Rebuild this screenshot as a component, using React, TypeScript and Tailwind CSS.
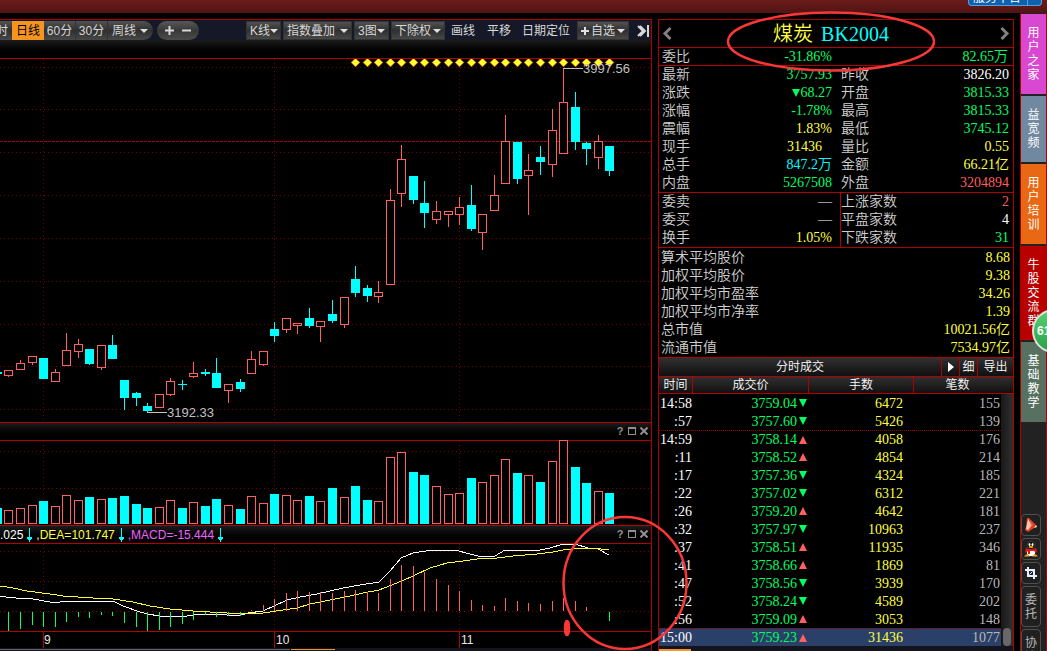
import { ReactNode } from "react";

// [kind, high, body top, body bottom, low, volume top, macd end]
type Candle = ["u" | "d", number, number, number, number, number, number];

const CANDLES: Candle[] = [
  ["u", 370, 370, 376, 377, 510, 631],
  ["u", 360, 363, 370, 370, 508, 629],
  ["u", 356, 356, 363, 365, 505, 625],
  ["d", 358, 358, 379, 379, 501, 627],
  ["u", 369, 372, 382, 382, 506, 627],
  ["u", 333, 350, 366, 366, 495, 622],
  ["u", 339, 344, 352, 358, 500, 617],
  ["d", 349, 349, 364, 365, 497, 618],
  ["u", 345, 345, 368, 370, 499, 615],
  ["d", 335, 345, 359, 359, 498, 616],
  ["d", 380, 380, 398, 410, 496, 623],
  ["d", 392, 393, 398, 406, 504, 627],
  ["d", 403, 406, 411, 412, 508, 631],
  ["u", 394, 394, 408, 408, 507, 630],
  ["u", 378, 381, 395, 396, 500, 627],
  ["d", 380, 384, 385, 390, 508, 624],
  ["u", 362, 373, 377, 378, 502, 620],
  ["d", 369, 372, 374, 376, 506, 615],
  ["d", 358, 373, 388, 388, 499, 617],
  ["u", 384, 384, 391, 403, 505, 616],
  ["d", 379, 382, 389, 392, 509, 616],
  ["u", 351, 359, 374, 374, 496, 610],
  ["u", 351, 351, 365, 366, 503, 605],
  ["d", 322, 329, 336, 342, 494, 599],
  ["u", 318, 318, 330, 333, 495, 593],
  ["u", 323, 323, 326, 334, 500, 591],
  ["d", 308, 318, 326, 328, 496, 592],
  ["u", 321, 321, 327, 342, 501, 592],
  ["d", 300, 314, 321, 323, 488, 593],
  ["u", 297, 297, 325, 328, 497, 591],
  ["d", 266, 279, 293, 297, 486, 590],
  ["d", 285, 288, 296, 302, 500, 592],
  ["u", 281, 292, 297, 303, 501, 593],
  ["u", 189, 200, 285, 285, 457, 579],
  ["u", 145, 159, 194, 207, 452, 565],
  ["d", 176, 176, 200, 204, 472, 566],
  ["d", 181, 203, 213, 228, 475, 572],
  ["u", 201, 211, 220, 224, 486, 579],
  ["u", 211, 211, 215, 227, 494, 585],
  ["u", 197, 207, 215, 225, 493, 591],
  ["d", 185, 205, 229, 231, 478, 600],
  ["u", 214, 214, 233, 250, 482, 605],
  ["u", 175, 195, 211, 211, 475, 606],
  ["u", 115, 141, 184, 184, 459, 598],
  ["d", 142, 142, 179, 184, 473, 601],
  ["u", 154, 170, 176, 215, 475, 603],
  ["d", 146, 157, 162, 175, 482, 604],
  ["u", 109, 130, 165, 177, 461, 601],
  ["u", 68, 102, 154, 154, 440, 598],
  ["d", 92, 107, 142, 150, 467, 601],
  ["d", 142, 143, 149, 165, 483, 607],
  ["u", 135, 141, 158, 169, 491, 611],
  ["d", 146, 146, 171, 176, 493, 621],
];

const DIF =
  "0,596 6,597 16,598 33,599 50,602 60,602 73,601 97,601 113,601 123,606 137,611 147,614 160,616 187,616 200,614 227,615 238,616 248,613 263,611 274,606 287,600 300,597 317,594 330,591 343,588 360,585 379,582 390,571 401,558 413,553 432,550 455,550 470,554 478,556 495,556 505,550 540,550 550,548 563,544 575,544 588,548 598,549 609,555";
const DEA =
  "0,586 13,588 27,591 50,594 63,596 93,598 113,599 133,602 150,606 170,609 193,611 227,613 240,614 263,613 283,610 297,608 310,604 330,600 350,596 363,593 379,590 397,583 413,576 430,568 447,563 463,561 477,559 497,558 513,556 537,554 553,552 563,550 580,548 593,548 609,550";

const cx = (i: number) => Math.round(8.4 + 11.556 * i);

const RED = "#ff6060";
const CYAN = "#00ffff";

function Grid({ rows, top, bottom }: { rows: number[]; top: number; bottom: number }) {
  return (
    <g stroke="#780000" strokeDasharray="1 3" shapeRendering="crispEdges">
      {rows.map((y) => (
        <line key={y} x1={0} x2={650} y1={y + 0.5} y2={y + 0.5} />
      ))}
      {[43, 274, 459].map((x) => (
        <line key={x} x1={x + 0.5} x2={x + 0.5} y1={top} y2={bottom} />
      ))}
    </g>
  );
}

function PriceChart() {
  return (
    <svg className="block w-full h-[363px]" viewBox="0 59 651 363" preserveAspectRatio="xMaxYMid meet" role="img" aria-label="日线">
      <Grid rows={[67, 109, 152, 195, 238, 281, 324, 366, 409]} top={59} bottom={420} />
      <line x1={0} x2={651} y1={141.5} y2={141.5} stroke="#b00000" strokeDasharray="3 1" />
      <g shapeRendering="crispEdges">
        <rect x={0} y={372} width={2} height={2} fill={CYAN} />
        {CANDLES.map(([kind, hi, top, bottom, lo], i) => {
          const x = cx(i);
          const color = kind === "u" ? RED : CYAN;
          return (
            <g key={i}>
              <rect x={x} y={hi} width={1} height={lo - hi} fill={color} />
              {kind === "u" ? (
                <rect x={x - 3.5} y={top + 0.5} width={8} height={bottom - top - 1} fill="#000" stroke={color} />
              ) : (
                <rect x={x - 4} y={top} width={9} height={bottom - top} fill={color} />
              )}
            </g>
          );
        })}
      </g>
      {CANDLES.slice(30).map((_, i) => {
        const x = cx(i + 30) + 0.5;
        return <path key={i} d={`M${x - 4.5} 62.5 L${x} 58 L${x + 4.5} 62.5 L${x} 67 Z`} fill="#ffff30" stroke="#a00000" strokeWidth={0.5} />;
      })}
      <path d="M563 68.5H583M147 412.5H167" stroke="#c0c0c0" fill="none" />
      <g fill="#c0c0c0" fontSize={13} fontFamily="Liberation Sans, sans-serif">
        <text x={583} y={73}>3997.56</text>
        <text x={167} y={417}>3192.33</text>
      </g>
    </svg>
  );
}

function VolumeChart() {
  return (
    <svg className="block w-full h-[84px]" viewBox="0 441 651 84" preserveAspectRatio="xMaxYMid meet" overflow="visible" role="img" aria-label="成交量">
      <Grid rows={[451, 488]} top={441} bottom={524} />
      <g shapeRendering="crispEdges">
        <rect x={0} y={508} width={2} height={16} fill={CYAN} />
        {CANDLES.map(([kind, , , , , vol], i) =>
          kind === "u" ? (
            <rect key={i} x={cx(i) - 3.5} y={vol + 0.5} width={8} height={523 - vol} fill="#000" stroke={RED} />
          ) : (
            <rect key={i} x={cx(i) - 4} y={vol} width={9} height={524 - vol} fill={CYAN} />
          ),
        )}
      </g>
    </svg>
  );
}

function MacdChart() {
  return (
    <svg className="block w-full h-[87px]" viewBox="0 544 651 87" preserveAspectRatio="xMaxYMid meet" role="img" aria-label="MACD">
      <Grid rows={[551, 581, 611]} top={544} bottom={631} />
      <g fill="none" strokeWidth={1} shapeRendering="crispEdges">
        <polyline points={DIF} stroke="#ffffff" />
        <polyline points={DEA} stroke="#ffff30" />
      </g>
      <g shapeRendering="crispEdges">
        {CANDLES.map((c, i) => {
          const end = c[6];
          return end > 611 ? (
            <rect key={i} x={cx(i)} y={612} width={1} height={end - 612} fill="#00ff60" />
          ) : (
            <rect key={i} x={cx(i)} y={end} width={1} height={611 - end} fill={RED} />
          );
        })}
      </g>
    </svg>
  );
}

function TimeAxis() {
  return (
    <svg className="block w-full h-4" viewBox="0 632 651 16" preserveAspectRatio="xMaxYMid meet">
      <path d="M43.5 632V648M274.5 632V648M459.5 632V648" stroke="#b00000" />
      <g fill="#e8e8e8" fontSize={12} fontFamily="Liberation Sans, sans-serif">
        <text x={44} y={644}>9</text>
        <text x={276} y={644}>10</text>
        <text x={461} y={644}>11</text>
      </g>
    </svg>
  );
}

function PaneHeader({ children }: { children?: ReactNode }) {
  return (
    <div className="flex items-center justify-between h-[17px] shrink-0 bg-linear-to-b from-[#1c1c1c] to-black">
      <div className="flex items-center text-[12px] leading-4 whitespace-nowrap">{children}</div>
      <div className="flex items-center gap-1 pr-[3px] pb-px text-[#909090]">
        <button aria-label="帮助" className="w-2 text-[11px] leading-4 font-bold">?</button>
        <button aria-label="最大化" className="w-2 h-2 border border-t-2 border-[#909090]" />
        <button aria-label="关闭">
          <svg width="8" height="8" viewBox="0 0 8 8" stroke="currentColor" strokeWidth="2">
            <path d="M0.5 0.5L7.5 7.5M7.5 0.5L0.5 7.5" />
          </svg>
        </button>
      </div>
    </div>
  );
}

const DownArrow = () => (
  <svg className="mx-1" width="5" height="14" viewBox="0 0 5 14" fill="#00ffff">
    <path d="M2 0H3V9H5V11H4V12H3V14H2V12H1V11H0V9H2Z" />
  </svg>
);

const Caret = () => (
  <svg width="8" height="4" viewBox="0 0 8 4" fill="#e0e0e0" className="shrink-0">
    <path d="M0 0H8L4 4Z" />
  </svg>
);

const toolBtn = "flex items-center justify-between h-[19px] px-[3px] border border-[#333] bg-linear-to-b from-[#525252] via-[#303030] to-[#484848] shrink-0";

function Toolbar() {
  return (
    <div className="flex items-center h-5 pt-px shrink-0 overflow-hidden bg-[#151826] text-[12px] leading-4 text-[#d8d8d8] whitespace-nowrap">
      <div className="flex items-center h-[19px] rounded-r-full bg-linear-to-b from-[#525252] via-[#303030] to-[#484848] shrink-0">
        <button className="flex justify-end w-3 h-full items-center overflow-hidden pr-1">时</button>
        <button className="w-8 h-full bg-[#f79420] text-black">日线</button>
        <button className="w-8 h-full border-r border-[#333]">60分</button>
        <button className="w-8 h-full border-r border-[#333]">30分</button>
        <button className="flex items-center gap-1 w-[45px] h-full pl-1">周线<Caret /></button>
      </div>
      <div className="flex items-center justify-evenly ml-1 w-[42px] h-[19px] rounded-full bg-linear-to-b from-[#585858] via-[#383838] to-[#4c4c4c] shrink-0">
        <button aria-label="放大">
          <svg width="9" height="9" viewBox="0 0 9 9" stroke="#d8d8d8" strokeWidth="2"><path d="M0 4.5H9M4.5 0V9" /></svg>
        </button>
        <button aria-label="缩小">
          <svg width="9" height="9" viewBox="0 0 9 9" stroke="#d8d8d8" strokeWidth="2"><path d="M0 4.5H9" /></svg>
        </button>
      </div>
      <div className="flex items-center ml-auto shrink-0">
        <button className={`${toolBtn} w-[35px] mr-0.5`}>K线<Caret /></button>
        <button className={`${toolBtn} w-[69px] mr-0.5`}>指数叠加<Caret /></button>
        <button className={`${toolBtn} w-[35px] mr-0.5`}>3图<Caret /></button>
        <button className={`${toolBtn} w-[54px] mr-1.5`}>下除权<Caret /></button>
        <button className="mr-3">画线</button>
        <button className="mr-[11px]">平移</button>
        <button className="mr-[7px]">日期定位</button>
        <button className={`${toolBtn} w-[52px] mr-2`}>
          <svg width="8" height="8" viewBox="0 0 8 8" stroke="#e0e0e0" strokeWidth="2"><path d="M0 4H8M4 0V8" /></svg>
          自选<Caret />
        </button>
        <button aria-label="收起" className="mr-0.5">
          <svg width="12" height="12" viewBox="0 0 12 12" stroke="#d8d8d8" strokeWidth="2" fill="none"><path d="M1 1L6 6L1 11M3 1L8 6L3 11M11 0V12" /></svg>
        </button>
      </div>
    </div>
  );
}

const G = "text-[#00ff60]";
const Y = "text-[#ffff40]";
const C = "text-[#00ffff]";
const R = "text-[#ff5c5c]";
const W = "text-white";

const QUOTES: [string, string, string, string, string, string][] = [
  ["最新", "3757.93", G, "昨收", "3826.20", W],
  ["涨跌", "▼68.27", G, "开盘", "3815.33", G],
  ["涨幅", "-1.78%", G, "最高", "3815.33", G],
  ["震幅", "1.83%", Y, "最低", "3745.12", G],
  ["现手", "31436", Y, "量比", "0.55", Y],
  ["总手", "847.2万", C, "金额", "66.21亿", Y],
  ["内盘", "5267508", G, "外盘", "3204894", R],
];

const BREADTH: [string, string, string, string, string, string][] = [
  ["委卖", "—", W, "上涨家数", "2", R],
  ["委买", "—", W, "平盘家数", "4", W],
  ["换手", "1.05%", Y, "下跌家数", "31", G],
];

const AVERAGES = [
  ["算术平均股价", "8.68"],
  ["加权平均股价", "9.38"],
  ["加权平均市盈率", "34.26"],
  ["加权平均市净率", "1.39"],
  ["总市值", "10021.56亿"],
  ["流通市值", "7534.97亿"],
];

const TICKS: [string, string, boolean, string, string][] = [
  ["14:58", "3759.04", false, "6472", "155"],
  [":57", "3757.60", false, "5426", "139"],
  ["14:59", "3758.14", true, "4058", "176"],
  [":11", "3758.52", true, "4854", "214"],
  [":17", "3757.36", false, "4324", "185"],
  [":22", "3757.02", false, "6312", "221"],
  [":26", "3759.20", true, "4642", "181"],
  [":32", "3757.97", false, "10963", "237"],
  [":37", "3758.51", true, "11935", "346"],
  [":41", "3758.66", true, "1869", "81"],
  [":47", "3758.56", false, "3939", "170"],
  [":52", "3758.24", false, "4589", "202"],
  [":56", "3759.09", true, "3053", "148"],
  ["15:00", "3759.23", true, "31436", "1077"],
];

function QuoteRows({ rows, split }: { rows: typeof QUOTES; split?: boolean }) {
  return (
    <div className="border-b border-[#b00000]">
      {rows.map(([l1, v1, c1, l2, v2, c2]) => (
        <div key={l1} className="flex h-[18px]">
          <div className="flex justify-between w-[181px] pl-[3px] pr-2">
            <span>{l1}</span>
            <span className={`${c1} ${l1 === "现手" ? "pr-[10px]" : ""}`}>
              {v1.startsWith("▼") ? (
                <>
                  <svg className="inline mr-px mb-0.5" width="8" height="8" viewBox="0 0 8 8" fill="currentColor"><path d="M0 0H8L4 8Z" /></svg>
                  {v1.slice(1)}
                </>
              ) : v1}
            </span>
          </div>
          <div className={`flex flex-1 justify-between pr-1 ${split ? "border-l border-[#b00000]" : "border-l border-transparent"}`}>
            <span>{l2}</span>
            <span className={c2}>{v2}</span>
          </div>
        </div>
      ))}
    </div>
  );
}

const barBg = "bg-linear-to-b from-[#303030] to-[#101010]";

function QuotePanel() {
  return (
    <section className="flex flex-col w-[356px] shrink-0 ml-1.5 border border-b-0 border-[#b00000] font-['Liberation_Serif','Noto_Sans_CJK_SC',serif] font-[350] text-[14px] leading-[18px] text-[#d0d0d0]">
      <div className="flex items-center justify-between h-7 shrink-0 px-[3px] border-b border-[#b00000]">
        <button aria-label="上一个">
          <svg width="10" height="13" viewBox="0 0 10 13" stroke="#808080" strokeWidth="3" fill="none"><path d="M8.500 1L3 6.500L8.500 12" /></svg>
        </button>
        <h1 className="flex gap-2 pr-[10px] text-[20px] leading-7">
          <span className={Y}>煤炭</span>
          <span className={C}>BK2004</span>
        </h1>
        <button aria-label="下一个">
          <svg width="10" height="13" viewBox="0 0 10 13" stroke="#808080" strokeWidth="3" fill="none"><path d="M1.500 1L7 6.500L1.500 12" /></svg>
        </button>
      </div>
      <div className="flex h-[18px] shrink-0 border-b border-[#b00000]">
        <div className="flex justify-between w-[181px] pl-[3px] pr-2">
          <span>委比</span>
          <span className={G}>-31.86%</span>
        </div>
        <span className={`${G} ml-auto pr-[5px]`}>82.65万</span>
      </div>
      <QuoteRows rows={QUOTES} />
      <QuoteRows rows={BREADTH} split />
      <div className="pt-px border-b border-[#b00000]">
        {AVERAGES.map(([label, value]) => (
          <div key={label} className="flex justify-between h-[18px] pl-0.5 pr-[3px]">
            <span>{label}</span>
            <span className={Y}>{value}</span>
          </div>
        ))}
      </div>
      <div className={`flex h-[19px] shrink-0 border-b border-[#b00000] text-[12px] text-white text-center ${barBg}`}>
        <h2 className="flex-1">分时成交</h2>
        <button aria-label="播放" className="flex items-center justify-center w-[18px] border-l border-[#b00000]">
          <svg width="6" height="10" viewBox="0 0 6 10" fill="#fff"><path d="M0 0L6 5L0 10Z" /></svg>
        </button>
        <button className="w-[18px] border-l border-[#b00000]">细</button>
        <button className="w-9 border-l border-[#b00000]">导出</button>
      </div>
      <div className="flex shrink-0">
        <table className="flex-1 w-full table-fixed border-separate border-spacing-0">
          <colgroup>
            <col className="w-[33px]" />
            <col className="w-[116px]" />
            <col className="w-[105px]" />
            <col />
          </colgroup>
          <thead>
            <tr className={`h-[17px] text-[12px] leading-4 text-white ${barBg}`}>
              <th className="p-0 font-[350] border-b border-[#b00000]">时间</th>
              <th className="p-0 font-[350] border-l border-b border-[#b00000]">成交价</th>
              <th className="p-0 font-[350] border-l border-b border-[#b00000]">手数</th>
              <th className="p-0 font-[350] border-l border-b border-[#b00000]">笔数</th>
            </tr>
          </thead>
          <tbody className="leading-[17px]">
            {TICKS.map(([time, price, up, lots, count], i) => {
              const cell = i === 2 || i === 13 ? "p-0 border-t border-dotted border-[#900000]" : "p-0";
              return (
                <tr key={i} className={`h-[18px] text-right ${i === 13 ? "bg-[#2a4068]" : ""}`}>
                  <td className={`${cell} text-white`}>{time}</td>
                  <td className={`${cell} pr-px ${G}`}>
                    {price}
                    <svg className="inline ml-0.5 mb-0.5" width="8" height="8" viewBox="0 0 8 8" fill={up ? RED : "#00ff60"}>
                      <path d={up ? "M0 8H8L4 0Z" : "M0 0H8L4 8Z"} />
                    </svg>
                  </td>
                  <td className={`${cell} pr-[10px] ${Y}`}>{lots}</td>
                  <td className={`${cell} pr-px text-[#b8b8b8]`}>{count}</td>
                </tr>
              );
            })}
          </tbody>
        </table>
        <div className="flex flex-col w-3">
          <div className={`h-[17px] border-b border-[#b00000] ${barBg}`} />
          <div className="flex flex-1 flex-col justify-end px-0.5 bg-linear-to-r from-[#181818] to-[#303030]">
            <div className="h-[18px] rounded-full bg-[#686868]" />
          </div>
        </div>
      </div>
      <div className="flex flex-1 items-end overflow-hidden bg-[#14141f]">
        <div className="w-8 h-0.5 bg-[#f79420]" />
      </div>
    </section>
  );
}

const SIDE_TABS = [
  { label: "用户之家", style: "h-20 bg-[#d848d0]" },
  { label: "益宽频", style: "h-[66px] bg-[#7088a0]" },
  { label: "用户培训", style: "h-20 bg-[#e86814]" },
  { label: "牛股交流群", style: "h-[94px] bg-[#b80000]" },
  { label: "基础教学", style: "h-20 bg-[#587060]" },
];

const sideBtn = "flex items-center justify-center w-5 shrink-0 border border-[#505050] rounded-sm bg-[#202020]";

function Sidebar() {
  return (
    <aside className="relative flex flex-col w-[27px] shrink-0 ml-1.5 -mt-1.5 pt-px overflow-hidden border-x border-[#b00000] bg-[#222]">
      <nav className="flex flex-col gap-0.5">
        {SIDE_TABS.map(({ label, style }) => (
          <button key={label} className={`flex items-center justify-center px-1.5 text-[12px] leading-[14px] text-white ${style}`}>
            <span className="w-3 break-all">{label}</span>
          </button>
        ))}
      </nav>
      <div className="flex flex-col gap-0.5 mt-[92px]">
        <button aria-label="喇叭" className={`${sideBtn} h-[22px]`}>
          <svg width="14" height="16" viewBox="0 0 14 16">
            <path d="M3 1L5 1L12 8L13 10L10 11L4 15L1 13L2 10Z" fill="#e04020" />
            <path d="M4 2L8 8L4 13L2 12Z" fill="#ffc8b8" />
            <path d="M5 3L9 8L7 9Z" fill="#f07050" />
            <path d="M12 8L13 10L10 11Z" fill="#ffe0d0" />
          </svg>
        </button>
        <button aria-label="QQ" className={`${sideBtn} h-[22px]`}>
          <svg width="14" height="16" viewBox="0 0 14 16">
            <ellipse cx="7" cy="4.500" rx="4" ry="4" fill="#050505" stroke="#666" strokeWidth="0.500" />
            <ellipse cx="5.500" cy="3.500" rx="1" ry="1.500" fill="#fff" />
            <ellipse cx="8.500" cy="3.500" rx="1" ry="1.500" fill="#fff" />
            <ellipse cx="7" cy="6" rx="2.500" ry="1" fill="#f8a800" />
            <path d="M3 8H11V13L9 15H5L3 13Z" fill="#fff" />
            <path d="M2 7L4 8H10L12 7L13 10L12 12L10 10H6V13H4V10L2 12L1 10Z" fill="#e01818" />
            <path d="M0 15.500L2 13.500H4L6 15.500ZM8 15.500L10 13.500H12L14 15.500Z" fill="#f8a800" />
          </svg>
        </button>
        <button aria-label="截图" className={`${sideBtn} h-[22px]`}>
          <svg width="14" height="14" viewBox="0 0 14 14" fill="none" stroke="#e8f0ff" strokeWidth="2">
            <path d="M4 1V10H13M1 4H10V13" />
            <path d="M5.500 8.500L8.500 5.500" strokeWidth="1" />
          </svg>
        </button>
        <button className={`${sideBtn} h-[41px] text-[12px] leading-[14px] text-[#b8b8b8]`}>
          <span className="w-3 break-all">委托</span>
        </button>
        <button className={`${sideBtn} h-[41px] text-[12px] leading-[14px] text-[#b8b8b8]`}>
          <span className="w-3 break-all">协议</span>
        </button>
      </div>
    </aside>
  );
}

export default function App() {
  return (
    <main className="relative flex flex-col h-screen overflow-hidden bg-black font-['Liberation_Sans','Noto_Sans_CJK_SC',sans-serif]">
      <header className="flex justify-end items-start h-[13px] shrink-0 pr-[5px] overflow-hidden bg-linear-to-b from-[#6c1c1a] to-[#501414]">
        <button className="flex items-end w-[74px] h-1.5 overflow-hidden rounded-b-sm border border-t-0 border-[#50a0e0] bg-[#1060b0] pl-1 text-[12px] leading-[14px] text-white">
          <span>服务平台</span>
          <span className="ml-1.5 w-px h-1.5 bg-[#50a0e0]" />
        </button>
      </header>
      <div className="flex flex-1 min-h-0 pt-1.5">
        <section className="flex flex-col flex-1 min-w-0 overflow-hidden border-t border-r border-[#b00000]">
          <Toolbar />
          <div className="h-[18px] shrink-0 bg-linear-to-b from-[#1c1c1c] to-black" />
          <div className="shrink-0 border-t border-b border-[#b00000]"><PriceChart /></div>
          <PaneHeader />
          <div className="shrink-0 border-t border-b border-[#b00000]"><VolumeChart /></div>
          <PaneHeader>
            <span className="text-white">.025</span><DownArrow />
            <span className="text-[#ffff40]">,DEA=101.747</span><DownArrow />
            <span className="text-[#f060ff]">,MACD=-15.444</span><DownArrow />
          </PaneHeader>
          <div className="shrink-0 border-t border-b border-[#b00000]"><MacdChart /></div>
          <TimeAxis />
          <div className="flex h-[3px] shrink-0 pt-px gap-px bg-[#14141f]">
            <div className="w-[290px] border-t border-[#606068]" />
            <div className="w-11 border-t border-[#f79420]" />
          </div>
        </section>
        <QuotePanel />
        <Sidebar />
      </div>

      {/* Floating progress ball */}
      <div className="absolute right-[-29px] top-[309px] flex items-center w-11 h-11 pl-[3px] rounded-full border-2 border-[#e0e0e0] bg-linear-to-b from-[#58d070] to-[#28a048] text-[12px] font-bold text-white">61</div>

      {/* Hand-drawn marks */}
      <svg className="absolute right-0 top-0 pointer-events-none" width="1047" height="651" viewBox="0 0 1047 651" fill="none" stroke="#f83838" strokeWidth="2.500">
        <ellipse cx="831" cy="41.500" rx="103" ry="29" />
        <ellipse cx="625" cy="583" rx="61.500" ry="66" />
        <ellipse cx="567" cy="628" rx="2" ry="7" fill="#f83838" />
      </svg>
    </main>
  );
}
